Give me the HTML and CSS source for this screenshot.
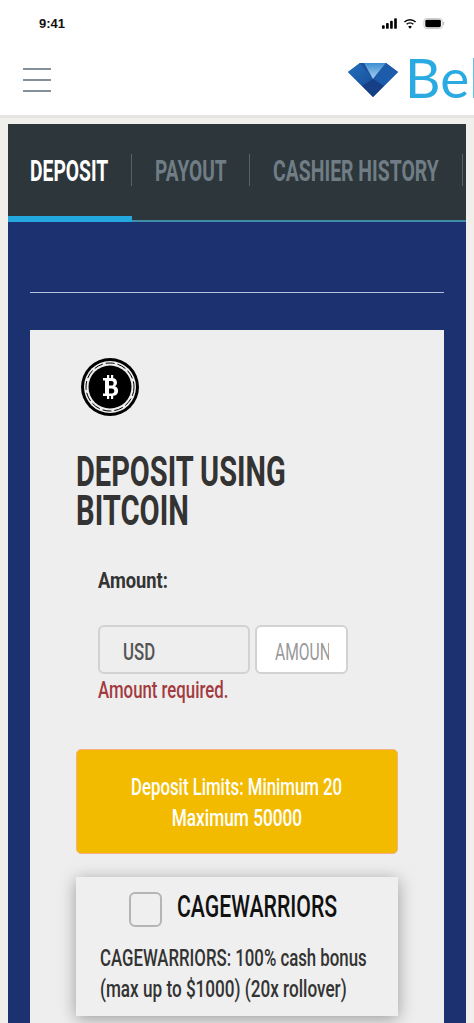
FILE: index.html
```html
<!DOCTYPE html>
<html lang="en">
<head>
    <meta charset="UTF-8">
    <meta name="viewport" content="width=device-width, initial-scale=1.0">
    <title>Deposit | Cashier</title>
    <link rel="stylesheet" href="styles.css">
</head>
<body>

    <!-- Status bar -->
    <div class="status-bar">
        <span class="clock">9:41</span>
        <div class="status-icons">
            <svg width="15" height="11" viewBox="0 0 17 12"><rect x="0" y="8" width="3" height="4" rx="1"/><rect x="4.600" y="5.500" width="3" height="6.500" rx="1"/><rect x="9.200" y="3" width="3" height="9" rx="1"/><rect x="13.800" y="0" width="3" height="12" rx="1"/></svg>
            <svg width="14" height="11" viewBox="0 0 15 11"><path d="M7.500 2.200c2.100 0 4 .8 5.400 2.200l1.100-1.100A9.300 9.300 0 0 0 7.500.6 9.300 9.300 0 0 0 1 3.300l1.100 1.100a7.700 7.700 0 0 1 5.400-2.200z"/><path d="M7.500 5.600c1.200 0 2.200.4 3 1.200l1.100-1.100a5.900 5.900 0 0 0-8.200 0l1.100 1.100c.8-.8 1.800-1.200 3-1.200z"/><path d="M7.500 11l2-2.100a2.900 2.900 0 0 0-4 0z"/></svg>
            <svg width="22" height="11" viewBox="0 0 23 12"><rect x=".5" y=".5" width="20" height="11" rx="3" fill="none" stroke="#c4c4c4"/><rect x="2" y="2" width="17" height="8" rx="1.600"/><rect x="21.300" y="4" width="1.300" height="4" rx=".6" fill="#c4c4c4"/></svg>
        </div>
    </div>

    <!-- Site header -->
    <header class="site-header">
        <div class="burger"><span></span><span></span><span></span></div>
        <svg class="logo-mark" width="50" height="34" viewBox="0 0 50 34">
            <defs>
                <linearGradient id="gemTop" x1="0" y1="0" x2="0" y2="1">
                    <stop offset="0" stop-color="#3f8ed2"/>
                    <stop offset="1" stop-color="#a6d0ef"/>
                </linearGradient>
                <linearGradient id="gemLeft" x1="0" y1="0" x2="1" y2="1">
                    <stop offset="0" stop-color="#2270bd"/>
                    <stop offset="1" stop-color="#1a4f9c"/>
                </linearGradient>
            </defs>
            <polygon points="0,9 12,0 38,0 50,9 25,34" fill="#1a4f9c"/>
            <polygon points="0,9 12,0 25,17 14,23" fill="url(#gemLeft)"/>
            <polygon points="16,0 38,0 25,16" fill="url(#gemTop)"/>
            <polygon points="38,0 50,9 36,23 25,16" fill="#1d5cab"/>
            <polygon points="14,23 25,16 36,23 25,34" fill="#173f86"/>
        </svg>
        <span class="logo-text">Bel</span>
    </header>

    <main class="cashier">
        <!-- Tabs -->
        <nav class="tabs">
            <a class="tab tab-deposit tab-active"><span class="squeeze">DEPOSIT</span></a>
            <a class="tab tab-payout"><span class="squeeze">PAYOUT</span></a>
            <a class="tab tab-history"><span class="squeeze">CASHIER HISTORY</span></a>
        </nav>

        <section class="tab-body">
            <hr class="rule">

            <div class="card">
                <svg class="coin" width="58" height="58" viewBox="0 0 58 58">
                    <circle cx="29" cy="29" r="29" fill="#000"/>
                    <circle cx="29" cy="29" r="26" fill="#eee"/>
                    <circle cx="29" cy="29" r="24" fill="none" stroke="#000" stroke-width="1" stroke-dasharray="9 3"/>
                    <circle cx="29" cy="29" r="21.500" fill="#000"/>
                    <path fill="#fff" fill-rule="evenodd" d="M22 20h9c3.200 0 5 1.800 5 4.500 0 1.900-.9 3.200-2.400 3.800 2.200.5 3.500 2.200 3.500 4.500 0 3.200-2.200 5.200-5.600 5.200H22v-2.600h2V22.600h-2zM28 23v4.600h2.400c1.500 0 2.200-.9 2.200-2.300S31.900 23 30.400 23zM28 30.400v5h2.800c1.600 0 2.500-.9 2.500-2.500s-.9-2.500-2.500-2.500z"/>
                    <rect x="26" y="17" width="2.200" height="3.500" fill="#fff"/><rect x="30" y="17" width="2.200" height="3.500" fill="#fff"/>
                    <rect x="26" y="37.500" width="2.200" height="3.500" fill="#fff"/><rect x="30" y="37.500" width="2.200" height="3.500" fill="#fff"/>
                </svg>

                <h2 class="card-title">
                    <span class="squeeze title-one">DEPOSIT USING</span>
                    <span class="squeeze title-two">BITCOIN</span>
                </h2>

                <div class="amount-block">
                    <label class="amount-label"><span class="squeeze">Amount:</span></label>
                    <div class="amount-row">
                        <div class="field field-currency"><span class="squeeze">USD</span></div>
                        <div class="field field-amount"><div class="amount-clip"><span class="squeeze">AMOUNT</span></div></div>
                    </div>
                    <div class="error"><span class="squeeze">Amount required.</span></div>
                </div>

                <div class="limits">
                    <div><span class="squeeze limit-one">Deposit Limits: Minimum 20</span></div>
                    <div><span class="squeeze limit-two">Maximum 50000</span></div>
                </div>

                <div class="bonus">
                    <div class="bonus-head">
                        <span class="checkbox"></span>
                        <span class="bonus-name"><span class="squeeze">CAGEWARRIORS</span></span>
                    </div>
                    <div class="bonus-text">
                        <div><span class="squeeze bonus-one">CAGEWARRIORS: 100% cash bonus</span></div>
                        <div><span class="squeeze bonus-two">(max up to $1000) (20x rollover)</span></div>
                    </div>
                </div>
            </div>
        </section>
    </main>

</body>
</html>
```

FILE: styles.css
```css
html, body {
    margin: 0;
    height: 1023px;
    overflow: hidden;
}
body {
    font-family: Roboto, "Liberation Sans", sans-serif;
    background-color: #f0efeb;
    color: #333;
}
/* no condensed font installed, so text is narrowed by hand */
.squeeze {
    display: inline-block;
    white-space: nowrap;
    transform-origin: left center;
    transform: scaleX(0.65);
}
.status-bar {
    height: 46px;
    background-color: #fff;
    display: flex;
    justify-content: space-between;
    align-items: center;
    padding: 0 29px 0 39px;
}
.clock {
    font-family: "Liberation Sans", sans-serif;
    font-size: 13px;
    font-weight: bold;
    color: #111;
}
.status-icons {
    display: flex;
    align-items: center;
    gap: 6px;
}
.site-header {
    height: 69px;
    background-color: #fff;
    border-bottom: 3px solid #e6e5e1;
    display: flex;
    align-items: center;
    padding-left: 23px;
    overflow: hidden;
}
.burger {
    width: 28px;
    flex-shrink: 0;
    display: flex;
    flex-direction: column;
    gap: 9px;
    margin-top: -2px;
}
.burger span {
    height: 2px;
    background-color: #83909a;
}
.logo-mark {
    margin-left: 297px;
    margin-top: -2px;
    flex-shrink: 0;
}
.logo-text {
    font-family: Lato, sans-serif;
    font-weight: 400;
    font-size: 55px;
    color: #29abe2;
    margin-left: 7px;
    margin-top: -8px;
    min-width: 0;
    overflow: hidden;
}
.cashier {
    margin: 6px 8px 0;
}
.tabs {
    height: 92px;
    background-color: #2d363b;
    border-bottom: 2px solid #3d8ea6;
    display: flex;
    align-items: center;
    padding-bottom: 4px;
    position: relative;
}
.tabs::after {
    content: "";
    position: absolute;
    left: 0;
    bottom: -2px;
    width: 124px;
    height: 6px;
    background-color: #22a7df;
}
.tab {
    font-size: 29px;
    font-weight: 700;
    color: #707d85;
    line-height: 34px;
    height: 32px;
    box-sizing: border-box;
    padding-left: 22px;
    border-right: 1px solid #56626a;
}
.tab-active {
    color: #fff;
}
.tab-deposit {
    width: 124px;
}
.tab-payout {
    width: 118px;
    padding-left: 23px;
}
.tab-history {
    width: 213px;
    padding-left: 23px;
}
.tab-deposit .squeeze {
    transform: scaleX(0.665);
}
.tab-payout .squeeze {
    transform: scaleX(0.66);
}
.tab-history .squeeze {
    transform: scaleX(0.67);
}
.tab-body {
    background-color: #1c3170;
    padding: 70px 22px 0;
    height: 731px;
    overflow: hidden;
}
.rule {
    margin: 0;
    border: 0;
    height: 1px;
    background-color: #b5c0dc;
}
.card {
    margin-top: 37px;
    background-color: #eee;
    padding: 28px 46px 0;
    height: 800px;
    overflow: hidden;
}
.coin {
    display: block;
    margin-left: 5px;
}
.card-title {
    margin: 36px 0 0;
    font-size: 42px;
    line-height: 39px;
    font-weight: 700;
    color: #333;
}
.card-title .squeeze {
    display: block;
    width: max-content;
}
.card-title .title-one {
    transform: scaleX(0.69);
}
.card-title .title-two {
    transform: scaleX(0.695);
}
.amount-block {
    margin: 38px 0 0 22px;
}
.amount-label {
    display: block;
    font-size: 22px;
    font-weight: 700;
    line-height: 26px;
}
.amount-label .squeeze {
    transform: scaleX(0.83);
}
.amount-row {
    display: flex;
    gap: 5px;
    margin-top: 31px;
}
.field {
    height: 49px;
    box-sizing: border-box;
    border: 2px solid #d2d2d2;
    border-radius: 6px;
    font-size: 23px;
    font-weight: 500;
    line-height: 51px;
    padding-left: 23px;
    color: #555;
}
.field-currency {
    width: 152px;
}
.field-currency .squeeze {
    transform: scaleX(0.73);
}
.field-amount {
    width: 93px;
    background-color: #fff;
    color: #999;
    font-weight: 400;
    padding-left: 18px;
}
.amount-clip {
    width: 54px;
    overflow: hidden;
}
.amount-clip .squeeze {
    transform: scaleX(0.68);
}
.error {
    color: #a33a3e;
    font-size: 23px;
    font-weight: 500;
    line-height: 30px;
    margin-top: 2px;
}
.error .squeeze {
    transform: scaleX(0.73);
}
.limits {
    margin-top: 43px;
    width: 322px;
    height: 105px;
    box-sizing: border-box;
    background-color: #f2bb00;
    border: 1px solid #f5b08a;
    border-radius: 5px;
    color: #fff;
    font-size: 23px;
    font-weight: 500;
    line-height: 31px;
    text-align: center;
    padding-top: 22px;
}
.limits .squeeze {
    transform-origin: center;
}
.limits .limit-one {
    transform: scaleX(0.73);
}
.limits .limit-two {
    transform: scaleX(0.75);
}
.bonus {
    margin-top: 23px;
    width: 322px;
    height: 139px;
    background-color: #efefef;
    box-shadow: 0 3px 16px rgba(0, 0, 0, 0.35);
}
.bonus-head {
    display: flex;
    align-items: center;
    gap: 15px;
    padding: 15px 0 0 53px;
}
.checkbox {
    width: 33px;
    height: 35px;
    flex-shrink: 0;
    box-sizing: border-box;
    border: 2px solid #b5b5b5;
    border-radius: 6px;
}
.bonus-name {
    font-size: 31px;
    font-weight: 500;
    color: #111;
    line-height: 34px;
    margin-top: -6px;
}
.bonus-name .squeeze {
    transform: scaleX(0.685);
}
.bonus-text {
    margin: 16px 0 0 24px;
    font-size: 23px;
    font-weight: 500;
    line-height: 31px;
    color: #333;
}
.bonus-text .bonus-one {
    transform: scaleX(0.73);
}
.bonus-text .bonus-two {
    transform: scaleX(0.745);
}
```
